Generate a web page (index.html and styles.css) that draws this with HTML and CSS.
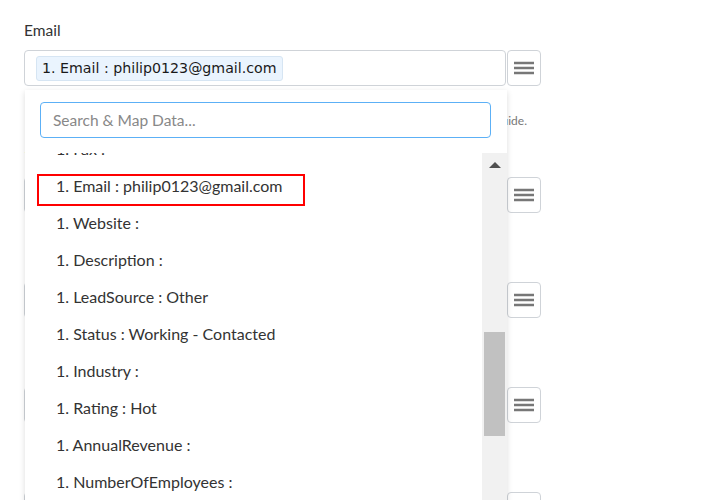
FILE: index.html
```html
<!DOCTYPE html>
<html lang="en">
<head>
    <meta charset="UTF-8">
    <meta name="viewport" content="width=device-width, initial-scale=1.0">
    <title>Map Data</title>
    <link rel="stylesheet" href="styles.css">
</head>
<body>
    <div class="page">
        <!-- Email field -->
        <div class="field field-with-help">
            <label class="field-label">Email</label>
            <div class="field-row">
                <div class="field-input">
                    <span class="chip">1. Email : philip0123@gmail.com</span>
                </div>
                <button class="menu-btn">
                    <svg width="20" height="14" viewBox="0 0 20 14"><path d="M0 2h20M0 7h20M0 12h20" stroke="#777" stroke-width="2.6"/></svg>
                </button>
            </div>
            <p class="help">Enter the lead email address, see the mapping guide.</p>
        </div>

        <div class="field">
            <label class="field-label">Website</label>
            <div class="field-row">
                <div class="field-input"></div>
                <button class="menu-btn">
                    <svg width="20" height="14" viewBox="0 0 20 14"><path d="M0 2h20M0 7h20M0 12h20" stroke="#777" stroke-width="2.6"/></svg>
                </button>
            </div>
        </div>

        <div class="field">
            <label class="field-label">Description</label>
            <div class="field-row">
                <div class="field-input"></div>
                <button class="menu-btn">
                    <svg width="20" height="14" viewBox="0 0 20 14"><path d="M0 2h20M0 7h20M0 12h20" stroke="#777" stroke-width="2.6"/></svg>
                </button>
            </div>
        </div>

        <div class="field">
            <label class="field-label">Lead Source</label>
            <div class="field-row">
                <div class="field-input"></div>
                <button class="menu-btn">
                    <svg width="20" height="14" viewBox="0 0 20 14"><path d="M0 2h20M0 7h20M0 12h20" stroke="#777" stroke-width="2.6"/></svg>
                </button>
            </div>
        </div>

        <div class="field">
            <label class="field-label">Status</label>
            <div class="field-row">
                <div class="field-input"></div>
                <button class="menu-btn">
                    <svg width="20" height="14" viewBox="0 0 20 14"><path d="M0 2h20M0 7h20M0 12h20" stroke="#777" stroke-width="2.6"/></svg>
                </button>
            </div>
        </div>

        <!-- Dropdown -->
        <div class="dropdown">
            <input class="search" type="text" placeholder="Search &amp; Map Data...">
            <div class="list-wrap">
                <ul class="list">
                    <li>1. Fax :</li>
                    <li>1. Email : philip0123@gmail.com<span class="highlight"></span></li>
                    <li>1. Website :</li>
                    <li>1. Description :</li>
                    <li>1. LeadSource : Other</li>
                    <li>1. Status : Working - Contacted</li>
                    <li>1. Industry :</li>
                    <li>1. Rating : Hot</li>
                    <li>1. AnnualRevenue :</li>
                    <li>1. NumberOfEmployees :</li>
                    <li>1. Street :</li>
                </ul>
                <div class="scrollbar">
                    <div class="scroll-up"></div>
                    <div class="scroll-thumb"></div>
                </div>
            </div>
        </div>
    </div>
</body>
</html>
```

FILE: styles.css
```css
body {
    margin: 0;
    font-family: Lato, "Open Sans", sans-serif;
    background-color: #fff;
    color: #333;
}

.page {
    position: relative;
    padding: 20px 24px 0 24px;
    height: 500px;
    overflow: hidden;
    box-sizing: border-box;
}

.field {
    margin-bottom: 39px;
}

.field-with-help {
    margin-bottom: 17px;
}

.field-label {
    display: block;
    font-size: 15.5px;
    line-height: 20px;
    margin-bottom: 10px;
    padding-left: 1px;
    color: #333;
}

.field-with-help .field-label {
    padding-left: 0;
}

.field-row {
    display: flex;
}

.field-input {
    width: 482px;
    height: 36px;
    border: 1px solid #cfd3d8;
    border-radius: 4px;
    box-sizing: border-box;
    padding: 5px 11px;
    margin-right: 1px;
}

.chip {
    display: inline-block;
    height: 25px;
    line-height: 23px;
    box-sizing: border-box;
    padding: 0 5px;
    background-color: #eaf4fe;
    border: 1px solid #d6e5f3;
    border-radius: 3px;
    font-family: "DejaVu Sans", Verdana, sans-serif;
    font-size: 14.2px;
    color: #1a1a1a;
}

.menu-btn {
    width: 34px;
    height: 36px;
    border: 1px solid #cfd3d8;
    border-radius: 4px;
    background-color: #fff;
    padding: 0;
    display: flex;
    align-items: center;
    justify-content: center;
}

.help {
    width: 503px;
    margin: 26px 0 0 0;
    font-size: 12px;
    line-height: 18px;
    color: #777;
    text-align: right;
    white-space: nowrap;
}

/* Dropdown */
.dropdown {
    position: absolute;
    top: 90px;
    left: 25px;
    width: 482px;
    background-color: #fff;
    box-shadow: 0 2px 6px rgba(0, 0, 0, 0.14);
    padding-top: 12px;
}

.search {
    display: block;
    margin: 0 0 15px 15px;
    width: 451px;
    height: 36px;
    box-sizing: border-box;
    border: 1px solid #5cb0f6;
    border-radius: 4px;
    padding: 0 12px;
    font-family: Lato, "Open Sans", sans-serif;
    font-size: 15.5px;
    color: #333;
    outline: none;
}

.search::placeholder {
    color: #888;
}

.list-wrap {
    display: flex;
    height: 360px;
    overflow: hidden;
}

.list {
    flex: 1;
    list-style: none;
    margin: -23px 0 0 0;
    padding: 0;
}

.list li {
    position: relative;
    height: 37px;
    line-height: 37px;
    padding-left: 31px;
    font-size: 16px;
    color: #333;
}

.highlight {
    position: absolute;
    top: 7px;
    left: 12px;
    width: 268px;
    height: 32px;
    box-sizing: border-box;
    border: 2px solid #f00;
}

.scrollbar {
    width: 25px;
    background-color: #f1f1f1;
}

.scroll-up {
    width: 0;
    height: 0;
    margin: 9px auto 0 auto;
    border-left: 6px solid transparent;
    border-right: 6px solid transparent;
    border-bottom: 6px solid #505050;
}

.scroll-thumb {
    width: 21px;
    height: 104px;
    margin: 164px 0 0 2px;
    background-color: #c1c1c1;
}
```
